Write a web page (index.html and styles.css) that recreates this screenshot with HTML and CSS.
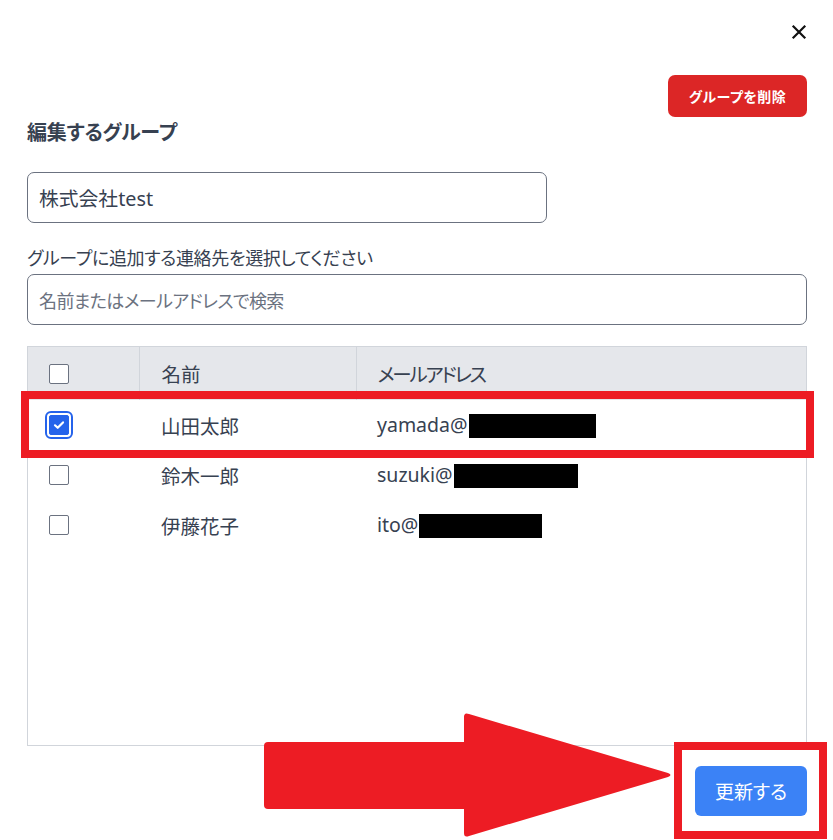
FILE: index.html
```html
<!DOCTYPE html>
<html lang="ja">
<head>
<meta charset="utf-8">
<title>グループ編集</title>
<link rel="stylesheet" href="styles.css">
</head>
<body>
<div class="page">
  <div class="top-bar">
    <button class="close" aria-label="閉じる">
      <svg width="16" height="16" viewBox="0 0 16 16"><path d="M2.5 2.5 L13.5 13.5 M13.5 2.5 L2.5 13.5" stroke="#111" stroke-width="2.2" fill="none" stroke-linecap="square"/></svg>
    </button>
  </div>
  <div class="action-bar">
    <button class="btn-delete">グループを削除</button>
  </div>
  <h2 class="title">編集するグループ</h2>
  <div class="input group-name">株式会社test</div>
  <label class="label">グループに追加する連絡先を選択してください</label>
  <div class="input search">名前またはメールアドレスで検索</div>

  <div class="table-wrap">
    <table class="contacts">
      <thead>
        <tr>
          <th class="c-check"><span class="cb"></span></th>
          <th class="c-name">名前</th>
          <th class="c-mail kana">メールアドレス</th>
        </tr>
      </thead>
      <tbody>
        <tr>
          <td class="c-check"><span class="cb checked"><svg width="12" height="12" viewBox="0 0 12 12"><path d="M2 6.3 L4.7 8.8 L10 3.4" stroke="#fff" stroke-width="2.2" fill="none" stroke-linecap="round" stroke-linejoin="round"/></svg></span></td>
          <td class="c-name">山田太郎</td>
          <td class="c-mail">yamada@<span class="redact" style="width:127px"></span></td>
        </tr>
        <tr>
          <td class="c-check"><span class="cb"></span></td>
          <td class="c-name">鈴木一郎</td>
          <td class="c-mail">suzuki@<span class="redact" style="width:124px"></span></td>
        </tr>
        <tr>
          <td class="c-check"><span class="cb"></span></td>
          <td class="c-name">伊藤花子</td>
          <td class="c-mail">ito@<span class="redact" style="width:123px"></span></td>
        </tr>
      </tbody>
    </table>
  </div>

  <div class="footer">
    <button class="btn-update">更新する</button>
  </div>

  <div class="mark mark-row"></div>
  <div class="mark mark-btn"></div>
  <svg class="arrow" width="420" height="135" viewBox="260 708 420 135">
    <rect x="264" y="742" width="210" height="67" rx="4" fill="#ed1c24"/>
    <path d="M464 717 Q464 712 469 714 L668 773 Q673 775 668 777 L469 836 Q464 838 464 833 Z" fill="#ed1c24"/>
  </svg>
</div>
</body>
</html>
```

FILE: styles.css
```css
* { box-sizing: border-box; }

html, body {
  margin: 0;
  padding: 0;
  background: #fff;
}

body {
  font-family: "Noto Sans", "Noto Sans CJK JP", sans-serif;
  color: #374151;
  font-feature-settings: "palt";
}

.page {
  position: relative;
  width: 833px;
  height: 840px;
  padding: 0 26px 0 27px;
  display: flex;
  flex-direction: column;
}

.top-bar {
  display: flex;
  justify-content: flex-end;
  padding-top: 24px;
  height: 40px;
}

.close {
  width: 16px;
  height: 16px;
  padding: 0;
  border: 0;
  background: none;
  display: block;
}
.close svg { display: block; }

.action-bar {
  display: flex;
  justify-content: flex-end;
  margin-top: 35px;
}

.btn-delete {
  width: 139px;
  height: 42px;
  border: 0;
  border-radius: 7px;
  background: #dc2626;
  color: #fff;
  font-family: inherit;
  font-feature-settings: "palt";
  font-weight: 700;
  font-size: 14px;
  letter-spacing: 0.5px;
}

.title {
  margin: 1px 0 0;
  font-size: 20px;
  line-height: 30px;
  font-weight: 700;
  color: #374151;
  letter-spacing: -0.2px;
}

.input {
  height: 51px;
  border: 1px solid #6b7280;
  border-radius: 7px;
  padding: 0 11px;
  display: flex;
  align-items: center;
  font-size: 18px;
}

.group-name {
  width: 520px;
  margin-top: 24px;
  color: #374151;
  font-size: 19.8px;
}

.label {
  display: block;
  margin-top: 22px;
  font-size: 18px;
  line-height: 26px;
  color: #374151;
  letter-spacing: -0.35px;
}

.search {
  margin-top: 3px;
  color: #6b7280;
  letter-spacing: -0.6px;
}

.table-wrap {
  margin-top: 21px;
  height: 400px;
  border: 1px solid #d1d5db;
}

.contacts {
  width: 100%;
  border-collapse: collapse;
  font-size: 19.5px;
}

.contacts th {
  background: #e5e7eb;
  height: 53px;
  font-weight: 400;
  text-align: left;
  color: #374151;
}
.contacts th + th { border-left: 1px solid #d1d5db; }
.contacts th.kana { letter-spacing: -2.2px; }

.contacts td {
  height: 50px;
  color: #374151;
}

.c-check { width: 111px; padding: 0 0 0 21px; }
.c-name { width: 217px; padding: 0 0 0 22px; }
.c-mail { padding: 0 0 0 21px; }

.cb {
  display: block;
  width: 20px;
  height: 20px;
  border: 1.5px solid #6b7280;
  border-radius: 2px;
  background: #fff;
}
.cb.checked {
  background: #2563eb;
  border-color: #2563eb;
  outline: 2px solid #2563eb;
  outline-offset: 2px;
  display: flex;
  align-items: center;
  justify-content: center;
}
.cb svg { display: block; }

.redact {
  display: inline-block;
  height: 24px;
  background: #000;
  vertical-align: middle;
  margin-left: 1px;
  position: relative;
  top: -1px;
}

.footer {
  display: flex;
  justify-content: flex-end;
  margin-top: 20px;
}

.btn-update {
  width: 112px;
  height: 50px;
  border: 0;
  border-radius: 6px;
  background: #3b82f6;
  color: #fff;
  font-family: inherit;
  font-feature-settings: "palt";
  font-size: 19px;
}

.mark {
  position: absolute;
  border: 8px solid #ed1c24;
  pointer-events: none;
}
.mark-row { left: 21px; top: 391px; width: 793px; height: 67px; }
.mark-btn { left: 674px; top: 742px; width: 153px; height: 97px; }

.arrow {
  position: absolute;
  left: 260px;
  top: 708px;
  pointer-events: none;
}
```
